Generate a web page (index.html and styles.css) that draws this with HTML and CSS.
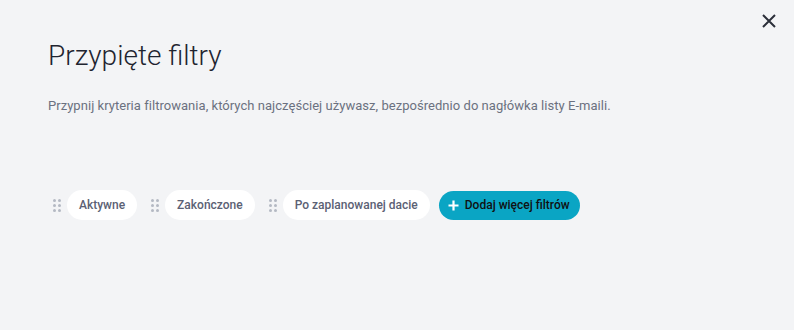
FILE: index.html
```html
<!DOCTYPE html>
<html lang="pl">
<head>
<meta charset="utf-8">
<link rel="stylesheet" href="styles.css">
</head>
<body>
<div class="panel">
  <button class="close" aria-label="Zamknij">
    <svg width="14" height="14" viewBox="0 0 14 14"><path d="M1 1L13 13M13 1L1 13" stroke="#2b2f3a" stroke-width="2" fill="none"/></svg>
  </button>
  <h1 class="title">Przypięte filtry</h1>
  <p class="desc">Przypnij kryteria filtrowania, których najczęściej używasz, bezpośrednio do nagłówka listy E-maili.</p>
  <div class="filters">
    <div class="item"><span class="handle"><i></i><i></i><i></i><i></i><i></i><i></i></span><span class="chip">Aktywne</span></div>
    <div class="item"><span class="handle"><i></i><i></i><i></i><i></i><i></i><i></i></span><span class="chip">Zakończone</span></div>
    <div class="item"><span class="handle"><i></i><i></i><i></i><i></i><i></i><i></i></span><span class="chip">Po zaplanowanej dacie</span></div>
    <button class="add"><svg width="11" height="11" viewBox="0 0 11 11"><path d="M5.5 0.5V10.5M0.5 5.5H10.5" stroke="#fff" stroke-width="2.2" fill="none"/></svg><span>Dodaj więcej filtrów</span></button>
  </div>
</div>
</body>
</html>
```
FILE: styles.css
```css
html, body {
  margin: 0;
  padding: 0;
  background: #f3f4f6;
  font-family: Roboto, "Liberation Sans", sans-serif;
}
.panel {
  position: relative;
  width: 794px;
  height: 330px;
  box-sizing: border-box;
  padding: 38px 48px 0 48px;
}
.close {
  position: absolute;
  top: 14px;
  right: 18px;
  width: 14px;
  height: 14px;
  padding: 0;
  border: 0;
  background: none;
  display: flex;
}
.title {
  margin: 0;
  font-size: 28px;
  font-weight: 300;
  line-height: 36px;
  color: #1f2430;
}
.desc {
  margin: 23px 0 0 0;
  font-size: 13px;
  line-height: 18px;
  letter-spacing: 0.04px;
  color: #6b7180;
}
.filters {
  margin-top: 75px;
  display: flex;
  align-items: center;
}
.item {
  display: flex;
  align-items: center;
  margin-right: 9px;
}
.handle {
  display: grid;
  grid-template-columns: 3px 3px;
  grid-auto-rows: 3px;
  column-gap: 2px;
  row-gap: 2px;
  margin: 0 6px 0 5px;
}
.handle i {
  display: block;
  width: 3px;
  height: 3px;
  border-radius: 50%;
  background: #b4b9c3;
}
.chip {
  display: inline-flex;
  align-items: center;
  height: 30px;
  padding: 0 12px;
  border-radius: 15px;
  background: #fff;
  font-size: 12px;
  font-weight: 500;
  color: #5b6174;
}
.add {
  display: inline-flex;
  align-items: center;
  height: 29px;
  padding: 0 10px 0 9px;
  border: 0;
  border-radius: 15px;
  background: #0aa5c4;
  font-family: Roboto, "Liberation Sans", sans-serif;
  font-size: 12px;
  font-weight: 500;
  color: #111;
}
.add svg { margin-right: 6px; }
```
